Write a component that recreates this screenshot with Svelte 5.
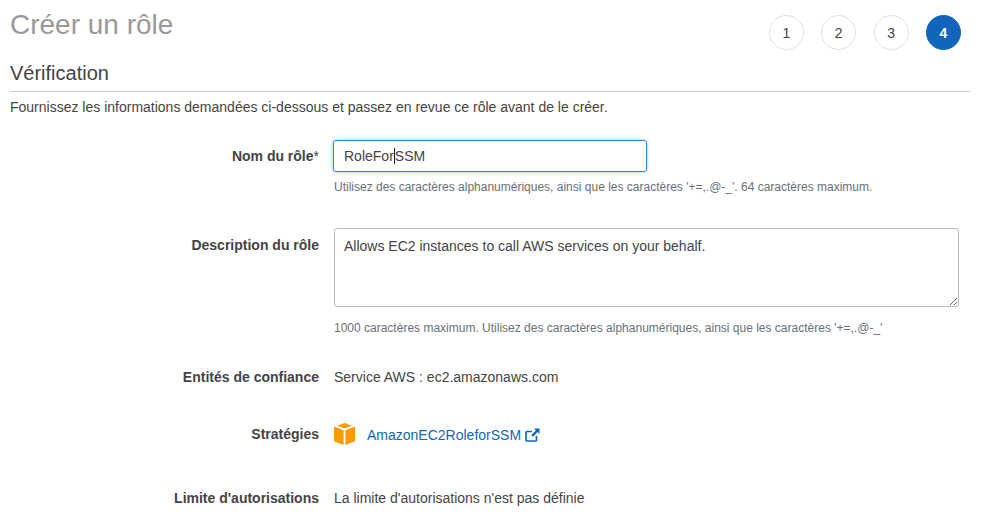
<script>
  const steps = [1, 2, 3, 4];
  let description = $state('Allows EC2 instances to call AWS services on your behalf.');
</script>

<div class="page">
  <header class="top">
    <h1>Créer un rôle</h1>
    <ol class="steps">
      {#each steps as step}
        <li class:active={step === 4}>{step}</li>
      {/each}
    </ol>
  </header>

  <h2>Vérification</h2>
  <p class="intro">Fournissez les informations demandées ci-dessous et passez en revue ce rôle avant de le créer.</p>

  <div class="form">
    <div class="row name-row">
      <div class="label">Nom du rôle<span class="star">*</span></div>
      <div class="field">
        <div class="input"><span>RoleFor</span><i class="caret"></i><span>SSM</span></div>
        <div class="hint">Utilisez des caractères alphanumériques, ainsi que les caractères '+=,.@-_'. 64 caractères maximum.</div>
      </div>
    </div>

    <div class="row desc-row">
      <div class="label">Description du rôle</div>
      <div class="field">
        <textarea bind:value={description}></textarea>
        <div class="hint">1000 caractères maximum. Utilisez des caractères alphanumériques, ainsi que les caractères '+=,.@-_'</div>
      </div>
    </div>

    <div class="row trust-row">
      <div class="label">Entités de confiance</div>
      <div class="field">Service AWS : ec2.amazonaws.com</div>
    </div>

    <div class="row policy-row">
      <div class="label">Stratégies</div>
      <div class="field policy">
        <svg class="cube" width="21" height="22" viewBox="0 0 21 22" aria-hidden="true">
          <path d="M10.5 0 L18 2.8 L10.5 5.6 L3 2.8 Z" fill="#f90"/>
          <path d="M0 3.6 L9.6 7.3 V22 L0 18.2 Z" fill="#f90"/>
          <path d="M21 3.6 L11.4 7.3 V22 L21 18.2 Z" fill="#f90"/>
        </svg>
        <a href="#policy">AmazonEC2RoleforSSM
          <svg class="ext" width="15" height="14" viewBox="0 0 15 14" aria-hidden="true">
            <path d="M11.5 8 V12 A1 1 0 0 1 10.5 13 H2 A1 1 0 0 1 1 12 V4.5 A1 1 0 0 1 2 3.5 H7" fill="none" stroke="#1166bb" stroke-width="1.7"/>
            <path d="M9 0.5 H14.5 V6 L12.6 4.1 L8 8.7 L6.3 7 L10.9 2.4 Z" fill="#1166bb"/>
          </svg>
        </a>
      </div>
    </div>

    <div class="row">
      <div class="label">Limite d'autorisations</div>
      <div class="field">La limite d'autorisations n'est pas définie</div>
    </div>
  </div>
</div>

<style>
  :global(body) {
    background: #fff;
    font-family: "Liberation Sans", Arial, sans-serif;
    font-size: 14px;
    color: #444;
  }

  .page {
    width: 960px;
    height: 523px;
    padding-left: 10px;
    overflow: hidden;
  }

  .top {
    display: flex;
    justify-content: space-between;
    height: 50px;
    padding-top: 9px;
    box-sizing: border-box;
  }

  h1 {
    margin: 0;
    font-size: 28px;
    font-weight: 400;
    line-height: 32px;
    color: #999;
  }

  .steps {
    display: flex;
    gap: 17.4px;
    list-style: none;
    margin: 6px 9px 0 0;
    padding: 0;
  }

  .steps li {
    width: 35px;
    height: 35px;
    box-sizing: border-box;
    border: 1px solid #e1e1e1;
    border-radius: 50%;
    display: flex;
    align-items: center;
    justify-content: center;
    color: #444;
  }

  .steps li.active {
    background: #1166bb;
    border-color: #1166bb;
    color: #fff;
    font-weight: 700;
  }

  h2 {
    margin: 11px 0 0;
    font-size: 20px;
    font-weight: 400;
    line-height: 24px;
    padding-bottom: 6px;
    border-bottom: 1px solid #ccc;
    color: #444;
  }

  .intro {
    margin: 7px 0 0;
    line-height: 17px;
  }

  .form {
    margin-top: 24px;
  }

  .row {
    display: grid;
    grid-template-columns: 309px 1fr;
    column-gap: 15px;
  }

  .label {
    text-align: right;
    font-weight: 700;
    line-height: 17px;
    color: #444;
  }

  .name-row .label {
    padding-top: 8px;
  }

  .star {
    font-weight: 400;
  }

  .input {
    width: 314px;
    height: 32px;
    margin-left: -1px;
    box-sizing: border-box;
    border: 1px solid #2e86de;
    border-radius: 3px;
    box-shadow: 0 0 3px rgba(46, 134, 222, 0.6);
    padding-left: 10px;
    display: flex;
    align-items: center;
  }

  .caret {
    width: 1px;
    height: 16px;
    background: #222;
  }

  .hint {
    font-size: 12px;
    line-height: 15px;
    color: #687078;
    margin-top: 8px;
  }

  .name-row {
    height: 88px;
  }

  .desc-row {
    height: 141px;
  }

  .desc-row .label {
    padding-top: 9px;
  }

  textarea {
    display: block;
    width: 625px;
    height: 79px;
    box-sizing: border-box;
    border: 1px solid #bbb;
    border-radius: 3px;
    padding: 9px 9px;
    font: inherit;
    line-height: 17px;
    color: #444;
    outline: none;
  }

  .desc-row .hint {
    margin-top: 14px;
  }

  .field {
    line-height: 17px;
  }

  .trust-row {
    height: 57px;
  }

  .policy-row {
    height: 64px;
  }

  .policy {
    display: flex;
    align-items: flex-start;
    gap: 12px;
  }

  .cube {
    margin-top: -3px;
  }

  .policy a {
    color: #1166bb;
    text-decoration: none;
    margin-top: 1px;
  }

  .ext {
    vertical-align: -2px;
  }
</style>
